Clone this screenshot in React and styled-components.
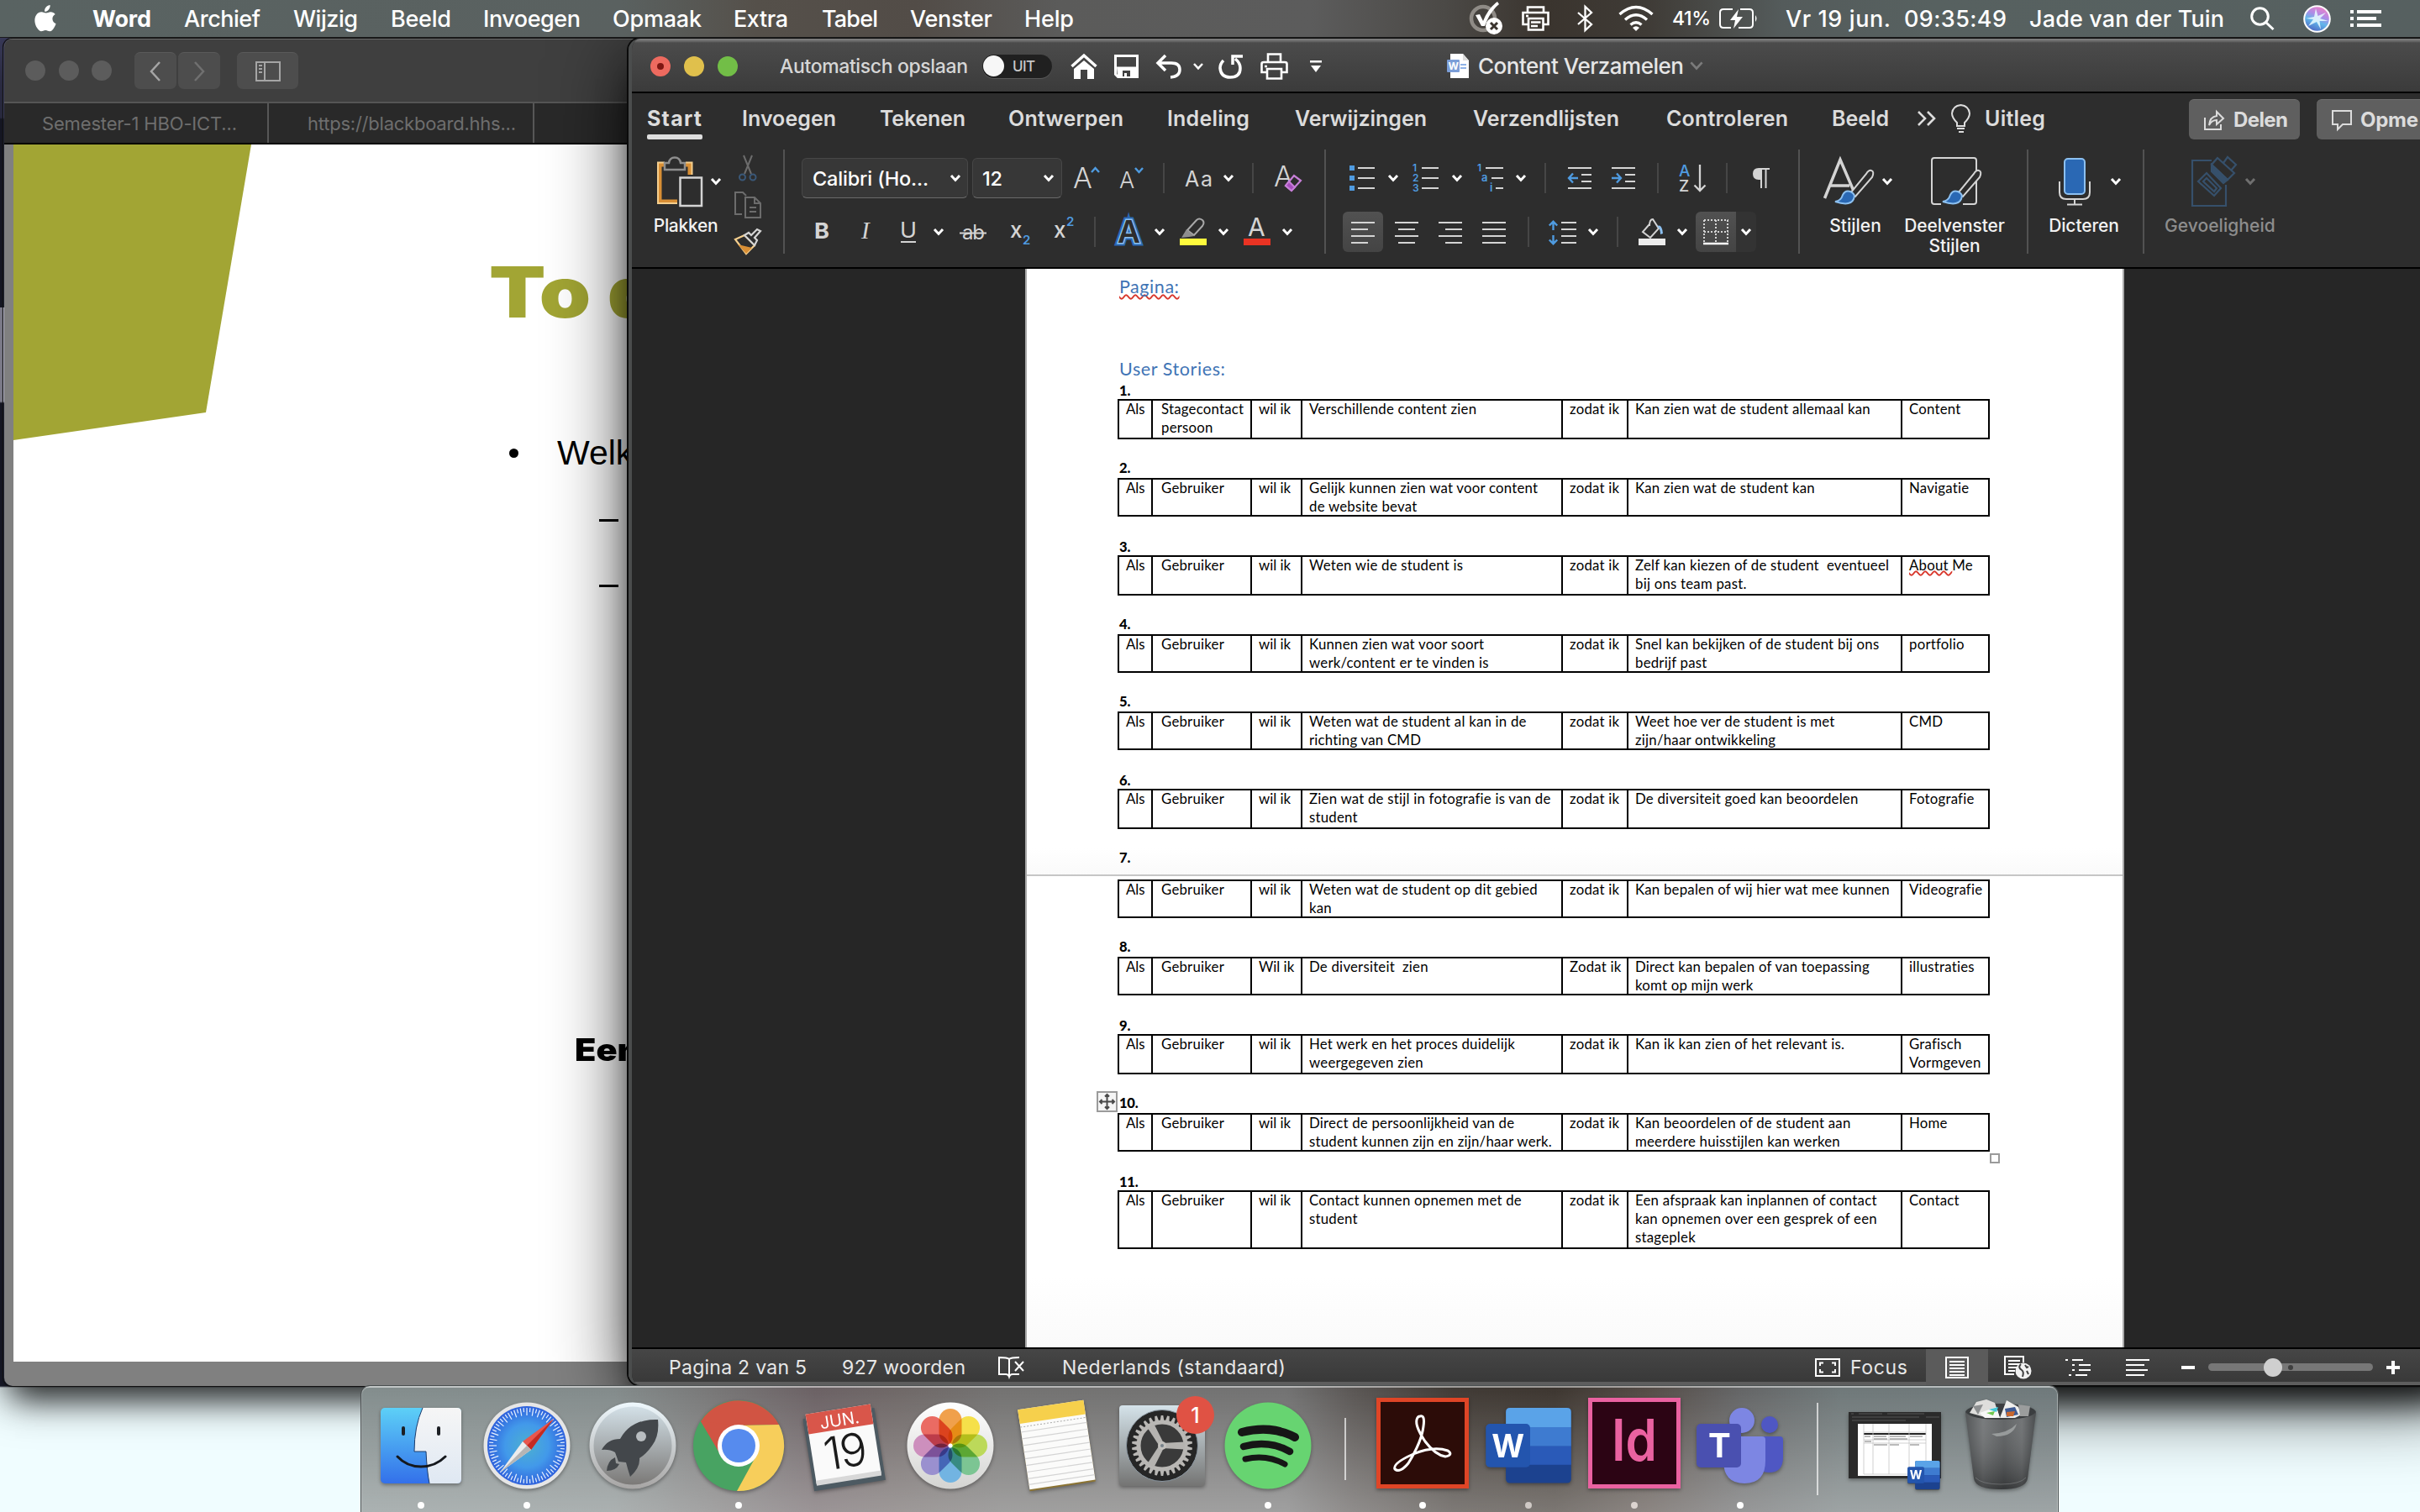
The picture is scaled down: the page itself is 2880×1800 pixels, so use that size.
import React, { useLayoutEffect, useRef, useState } from "react";
import styled, { createGlobalStyle, css } from "styled-components";

const UI = `Inter, "Liberation Sans", sans-serif`;
const DOC = `Lato, "Open Sans", sans-serif`;

const GlobalStyle = createGlobalStyle`
  * { box-sizing: border-box; }
  html, body { margin: 0; padding: 0; }
  body { width: 2880px; height: 1800px; overflow: hidden; font-family: ${UI}; background: #f0fdff; }
  svg { display: block; overflow: visible; flex: none; }
`;

/* ---------- shared parts ---------- */

const Text = styled.span`
  display: block;
  flex: none;
  white-space: pre;
  width: ${(p) => p.$w}px;
  margin-left: ${(p) => p.$ml || 0}px;
  font-family: ${(p) => p.$font || UI};
  font-size: ${(p) => p.$size || 27}px;
  font-weight: ${(p) => p.$weight || 400};
  color: ${(p) => p.$color || "#fff"};
`;

/* A one-line label whose tracking is adjusted so that it fills its column. */
function Label({ children, w, ...rest }) {
  const ref = useRef(null);
  const [tracking, setTracking] = useState(0);
  useLayoutEffect(() => {
    const natural = ref.current.getBoundingClientRect().width;
    setTracking((w - natural) / Math.max(1, String(children).length - 1));
  }, [children, w]);
  return (
    <Text $w={w} {...rest}>
      <span ref={ref} style={{ letterSpacing: tracking }}>{children}</span>
    </Text>
  );
}

const Slot = styled.div`
  flex: none;
  display: flex;
  align-items: center;
  width: ${(p) => p.$w}px;
  margin-left: ${(p) => p.$ml || 0}px;
`;

function Icon({ w, h, ml, vb, children, fill = "none", stroke, sw = 2 }) {
  return (
    <Slot $w={w} $ml={ml}>
      <svg width={w} height={h} viewBox={vb || `0 0 ${w} ${h}`} fill={fill} stroke={stroke} strokeWidth={sw}>
        {children}
      </svg>
    </Slot>
  );
}

const Chevron = ({ ml = 14, w = 12, h = 8, color = "#fff", sw = 3 }) => (
  <Icon w={w} h={h} ml={ml} vb="0 0 12 8" stroke={color} sw={sw}>
    <path d="M1 1 L6 6.4 L11 1" />
  </Icon>
);

const Desktop = styled.div`
  position: relative;
  width: 2880px;
  height: 1800px;
  overflow: hidden;
  background: linear-gradient(#3b3c5c 0 140px, #1e2133 142px 366px, #b5b4c8 366px 478px, #1e2133 480px 1650px, #f0fdff 1652px);
`;

/* ---------- menu bar ---------- */

const MenuBar = styled.header`
  position: absolute;
  inset: 0 0 auto 0;
  z-index: 5;
  height: 45px;
  display: flex;
  align-items: center;
  border-bottom: 1px solid #1c1c1c;
  background: linear-gradient(90deg, #596362 0, #5a6160 740px, #55504a 900px, #524c47 1090px, #5b5b5a 1260px, #5c5c5c 1560px, #4b4946 1720px, #3a342e 1840px, #3f3b36 1960px, #545b5b 2120px, #576160 2300px, #566060);
`;

function TopMenu() {
  return (
    <MenuBar>
      <Icon w={26} h={32} ml={42} vb="0 0 26 32" fill="#fff">
        <path d="M17.6 0c.3 2-.6 4-1.7 5.4-1.200 1.400-3 2.400-4.800 2.300-.3-2 .6-3.900 1.700-5.200C14 1.100 16 .1 17.600 0zM23.700 10.900c-2 1.200-3.300 3-3.300 5.400 0 2.800 1.700 5 4.200 5.900-.5 1.700-1.400 3.400-2.400 5-1.300 2-2.700 4-4.900 4-2.100 0-2.700-1.300-5.100-1.300s-3.200 1.300-5.200 1.300c-2.100.1-3.700-2.100-5-4.100C-.7 23-2 15.800 1.400 11.500 2.900 9.500 5.200 8.300 7.400 8.300c2.300 0 3.700 1.300 5.500 1.300 1.800 0 2.900-1.300 5.500-1.300 2 0 4 1 5.300 2.600z" />
      </Icon>
      <Label w={70} $ml={42} $weight={700}>Word</Label>
      <Label w={91} $ml={39} $weight={500}>Archief</Label>
      <Label w={77} $ml={39} $weight={500}>Wijzig</Label>
      <Label w={72} $ml={39} $weight={500}>Beeld</Label>
      <Label w={116} $ml={38} $weight={500}>Invoegen</Label>
      <Label w={106} $ml={38} $weight={500}>Opmaak</Label>
      <Label w={65} $ml={38} $weight={500}>Extra</Label>
      <Label w={67} $ml={40} $weight={500}>Tabel</Label>
      <Label w={98} $ml={38} $weight={500}>Venster</Label>
      <Label w={59} $ml={38} $weight={500}>Help</Label>
      <Icon w={40} h={40} ml={470}>
        <circle cx="17" cy="20" r="14" stroke="#8f8b86" strokeWidth="4.500" />
        <path d="M8 16 L13 15 L17 23 Q23 8 34 0 L36 3 Q25 12 19 29 L15 29 Z" fill="#fff" />
        <circle cx="30" cy="29" r="10" fill="#fff" />
        <path d="M26 25 L34 33 M34 25 L26 33" stroke="#3a342e" strokeWidth="3" />
      </Icon>
      <Icon w={33} h={30} ml={23} stroke="#fff" sw={2.600}>
        <path d="M7 7 V1.500 H26 V7 M7 22 H1.500 V8 H31.500 V22 H26 M8 15 H25.500 V28.500 H8 Z M11 19.500 H22.500 M11 24 H19" />
        <path d="M5 12 H8" />
      </Icon>
      <Icon w={19} h={32} ml={33} stroke="#fff" sw={2.300}>
        <path d="M1 9 L17 23 L9.500 30 V2 L17 9 L1 23" />
      </Icon>
      <Icon w={42} h={30} ml={30} stroke="#fff" sw={3.400}>
        <path d="M1.500 10 Q21 -7 40.500 10 M8 16.500 Q21 5 34 16.500 M14.500 22.500 Q21 17 27.500 22.500" />
        <path d="M17 26 Q21 22.500 25 26 L21 30 Z" fill="#fff" stroke="none" />
      </Icon>
      <Label w={46} $ml={22} $size={23} $weight={500}>41%</Label>
      <Icon w={46} h={24} ml={10} stroke="#fff" sw={2}>
        <path d="M16 1 H5 Q1 1 1 5 V19 Q1 23 5 23 H14 M25 1 H36 Q40 1 40 5 V19 Q40 23 36 23 H23" />
        <path d="M23 1 L13 14 H19 L17 24 L28 10 H21 Z" fill="#fff" stroke="none" />
        <path d="M43 8 Q46 12 43 16 Z" fill="#fff" stroke="none" />
      </Icon>
      <Label w={125} $ml={33} $weight={500}>Vr 19 jun.</Label>
      <Label w={122} $ml={16} $weight={500}>09:35:49</Label>
      <Label w={232} $ml={27} $weight={500}>Jade van der Tuin</Label>
      <Icon w={29} h={28} ml={31} stroke="#fff" sw={3}>
        <circle cx="11.500" cy="11.500" r="9.800" />
        <path d="M18.500 18.500 L27.500 27" />
      </Icon>
      <Icon w={33} h={33} ml={34}>
        <defs>
          <linearGradient id="siri" x1="0.700" y1="0" x2="0.300" y2="1">
            <stop offset="0" stopColor="#f47fc6" />
            <stop offset=".35" stopColor="#b08be6" />
            <stop offset=".6" stopColor="#62b6ea" />
            <stop offset="1" stopColor="#4a5fc0" />
          </linearGradient>
        </defs>
        <circle cx="16.500" cy="16.500" r="15.300" fill="url(#siri)" stroke="#fff" strokeWidth="2" />
        <path d="M15 4 L17.500 13 L27 9 L20 16 L30 19 L19.500 19 L21 29 L16 20 L6 25 L12 17 L3 16 L13 14 Z" fill="#e9fbff" opacity=".85" />
      </Icon>
      <Icon w={37} h={20} ml={23} stroke="#fff" sw={4}>
        <path d="M0 2 H4 M0 10 H4 M0 18 H4 M8 2 H37 M8 10 H31 M8 18 H37" />
      </Icon>
    </MenuBar>
  );
}

/* ---------- browser window ---------- */

const BrowserWindow = styled.section`
  position: absolute;
  left: 5px;
  top: 46px;
  width: 760px;
  height: 1604px;
  border-radius: 10px;
  overflow: hidden;
  display: flex;
  flex-direction: column;
  background: #808080;
`;
const BrowserShadow = styled.div`
  position: absolute;
  left: 4px;
  top: 46px;
  width: 1200px;
  height: 1604px;
  border-radius: 10px;
  box-shadow: 0 0 0 1px #111, 0 16px 50px rgba(0, 0, 0, 0.5), 0 26px 34px -14px rgba(0, 0, 0, 0.7);
`;
const BrowserBar = styled.div`
  height: 75px;
  flex: none;
  display: flex;
  align-items: center;
  background: #3f3f3f;
  border-top: 1px solid #6c6c6c;
`;
const GreyDot = styled.i`
  width: 24px;
  height: 24px;
  flex: none;
  border-radius: 50%;
  background: #5c5c5c;
  margin-left: ${(p) => p.$ml}px;
`;
const BarButton = styled.div`
  width: ${(p) => p.$w}px;
  height: 44px;
  flex: none;
  margin-left: ${(p) => p.$ml}px;
  border-radius: 7px;
  background: #4d4d4d;
  border-top: 1px solid #5a5a5a;
  display: flex;
  align-items: center;
  justify-content: center;
`;
const BrowserTabs = styled.div`
  height: 51px;
  flex: none;
  display: flex;
  background: #292929;
  border-top: 2px solid #555;
  border-bottom: 2px solid #000;
`;
const BrowserTab = styled.div`
  width: ${(p) => p.$w}px;
  flex: none;
  display: flex;
  align-items: center;
  border-right: 2px solid #575757;
`;
const Slide = styled.div`
  height: 1449px;
  margin-left: 11px;
  background: #fff;
  display: grid;
  grid-template-columns: 570px 1fr;
`;
const SlideText = styled.div`
  padding-top: 121px;
  display: flex;
  flex-direction: column;
  align-items: flex-start;
`;
const SlideTitle = styled.h1`
  margin: 0 0 0 -4px;
  font: 900 84px/110px ${UI};
  color: #a2a534;
  white-space: pre;
  transform: scaleX(1.17);
  transform-origin: left;
`;
const Bullet = styled.div`
  display: flex;
  align-items: center;
  height: 50px;
  margin-top: ${(p) => p.$mt}px;
  padding-left: 20px;
  font: 41px/50px "Liberation Sans", sans-serif;
  color: #000;
`;
const BulletDot = styled.i`
  width: 11px;
  height: 11px;
  flex: none;
  border-radius: 50%;
  background: #000;
  margin-right: 46px;
`;
const SubDash = styled.div`
  width: 23px;
  height: 3px;
  margin: ${(p) => p.$mt}px 0 0 127px;
  background: #000;
`;
const SlideFoot = styled.div`
  margin: 526px 0 0 98px;
  font: 900 37px/50px ${UI};
  color: #000;
  transform: scaleX(1.12);
  transform-origin: left;
`;

function Browser() {
  return (
    <BrowserWindow>
      <BrowserBar>
        <GreyDot $ml={25} /><GreyDot $ml={16} /><GreyDot $ml={15} />
        <BarButton $w={50} $ml={27}>
          <svg width="14" height="24" fill="none" stroke="#a5a5a5" strokeWidth="2.500"><path d="M12 1 L2 12 L12 23" /></svg>
        </BarButton>
        <BarButton $w={50} $ml={2}>
          <svg width="14" height="24" fill="none" stroke="#707070" strokeWidth="2.500"><path d="M2 1 L12 12 L2 23" /></svg>
        </BarButton>
        <BarButton $w={73} $ml={20}>
          <svg width="30" height="24" fill="none" stroke="#a5a5a5" strokeWidth="2"><path d="M1 1 H29 V23 H1 Z M11 1 V23 M4 5 H8 M4 9 H8 M4 13 H8" /></svg>
        </BarButton>
      </BrowserBar>
      <BrowserTabs>
        <BrowserTab $w={315}><Label w={232} $ml={45} $size={22} $color="#6e6e6e">Semester-1 HBO-ICT...</Label></BrowserTab>
        <BrowserTab $w={316}><Label w={248} $ml={46} $size={22} $color="#6e6e6e">https://blackboard.hhs...</Label></BrowserTab>
      </BrowserTabs>
      <Slide>
        <svg width="570" height="400"><path d="M0 0 H283 L229 319 L0 352 Z" fill="#a2a534" /></svg>
        <SlideText>
          <SlideTitle>To d</SlideTitle>
          <Bullet $mt={111}><BulletDot />Welk</Bullet>
          <SubDash $mt={54} />
          <SubDash $mt={75} />
          <SlideFoot>Een</SlideFoot>
        </SlideText>
      </Slide>
    </BrowserWindow>
  );
}

/* ---------- word window ---------- */

const WordWindow = styled.section`
  position: absolute;
  left: 748px;
  top: 46px;
  width: 2180px;
  height: 1603px;
  border-left: 4px solid #4b4d4d;
  border-radius: 14px;
  overflow: hidden;
  display: flex;
  flex-direction: column;
  background: #262626;
`;
const WordShadow = styled.div`
  position: absolute;
  left: 748px;
  top: 46px;
  width: 2180px;
  height: 1603px;
  border-radius: 14px;
  box-shadow: 0 0 0 2px #0b0b0b, 0 20px 90px rgba(0, 0, 0, 0.75), 0 34px 36px -14px rgba(0, 0, 0, 0.85);
`;
const TitleBar = styled.div`
  height: 65px;
  flex: none;
  display: flex;
  align-items: center;
  padding-top: 2px;
  border-bottom: 2px solid #000;
  background: linear-gradient(#818181 0, #6a6a6a 3px, #4b4b4b 5px, #3b3b3b);
`;
const Light = styled.i`
  width: 24px;
  height: 24px;
  flex: none;
  display: grid;
  place-items: center;
  border-radius: 50%;
  margin-left: ${(p) => p.$ml}px;
  background: ${(p) => p.$color};
  &::after {
    content: "";
    width: 8px;
    height: 8px;
    border-radius: 50%;
    background: ${(p) => (p.$dot ? "#7d1712" : "transparent")};
  }
`;
const Toggle = styled.div`
  width: 83px;
  height: 28px;
  flex: none;
  margin-left: 17px;
  border-radius: 14px;
  display: flex;
  align-items: center;
  background: #202020;
  box-shadow: 0 1px 0 #5a5a5a;
`;
const Knob = styled.i`
  width: 25px;
  height: 25px;
  margin-left: 1px;
  border-radius: 50%;
  background: #f7f7f7;
`;

const TabRow = styled.nav`
  height: 59px;
  flex: none;
  display: flex;
  align-items: center;
  background: #2d2d2d;
`;
const Tab = styled.div`
  position: relative;
  margin-left: ${(p) => p.$ml}px;
  ${(p) => p.$active && css`
    &::after {
      content: "";
      position: absolute;
      left: 0;
      right: -1px;
      bottom: -10px;
      height: 6px;
      border-radius: 2px;
      background: #dedede;
    }
  `}
`;
const ActionButton = styled.div`
  width: ${(p) => p.$w}px;
  height: 48px;
  flex: none;
  margin: 3px 0 0 ${(p) => p.$ml}px;
  border-radius: 6px;
  background: #5f5f5f;
  border-top: 1px solid #6f6f6f;
  display: flex;
  align-items: center;
`;
const Tools = styled.div`
  height: 150px;
  flex: none;
  display: flex;
  align-items: flex-start;
  padding-top: 8px;
  background: #2d2d2d;
  border-bottom: 2px solid #000;
`;
const Divider = styled.i`
  width: 2px;
  height: ${(p) => p.$h || 124}px;
  flex: none;
  margin-left: ${(p) => p.$ml || 0}px;
  background: ${(p) => (p.$h ? "#464646" : "#525252")};
`;
const Group = styled.div`
  width: ${(p) => p.$w}px;
  flex: none;
  margin-left: ${(p) => p.$ml || 0}px;
  padding-top: 10px;
  display: flex;
  flex-direction: column;
  gap: 16px;
`;
const Row = styled.div`
  height: 48px;
  display: flex;
  align-items: center;
`;
const SmallColumn = styled.div`
  margin-left: 16px;
  padding-top: 6px;
  display: flex;
  flex-direction: column;
  gap: 12px;
`;
const BigButton = styled.div`
  width: ${(p) => p.$w}px;
  flex: none;
  margin-left: ${(p) => p.$ml}px;
  padding-top: 6px;
`;
const BigIcon = styled.div`
  height: 64px;
  display: flex;
  align-items: center;
  padding-left: ${(p) => p.$pad}px;
`;
const BigLabel = styled.div`
  margin-top: 9px;
  text-align: center;
  white-space: nowrap;
  font-size: 21px;
  font-weight: 500;
  letter-spacing: ${(p) => p.$ls || 0}px;
  line-height: 24px;
  color: ${(p) => p.$color || "#f2f2f2"};
`;
const Select = styled.div`
  width: ${(p) => p.$w}px;
  height: 48px;
  flex: none;
  margin-left: ${(p) => p.$ml || 0}px;
  border: 1px solid #474747;
  border-bottom-color: #6a6a6a;
  border-radius: 6px;
  background: #373737;
  display: flex;
  align-items: center;
`;
const IconButton = styled.div`
  width: ${(p) => p.$w}px;
  height: 48px;
  flex: none;
  margin-left: ${(p) => p.$ml || 0}px;
  border-radius: ${(p) => p.$r || "6px"};
  background: ${(p) => p.$bg || "linear-gradient(#515151, #444)"};
  display: flex;
  align-items: center;
  justify-content: center;
`;

const G = "#d4d4d4";
const B = "#4f9be0";
const A = (p) => <text fontFamily={UI} fill={G} stroke="none" {...p} />;

const Brush = () => (
  <>
    <path d="M57 17 Q61 18 58 25 L38 48 L32 44 L51 21 Q54 16 57 17 Z" stroke={G} fill="#2d2d2d" />
    <path d="M14 54 Q21 53 23 46 Q26 40 32 42 Q39 45 36 51 Q32 60 14 54 Z" fill="#2a68b4" stroke="#8cc0f0" />
  </>
);

function HomeRibbon() {
  return (
    <Tools>
      <BigButton $w={84} $ml={22}>
        <BigIcon $pad={8}>
          <Icon w={54} h={60}>
            <path d="M9 10 H3 V54 H24 M34 10 H39 V22" stroke="#d98f35" strokeWidth="5" />
            <path d="M9 7.500 H1 V56 H24 M34 7.500 H41.500 V22" stroke="#f5cf8e" strokeWidth="2" />
            <path d="M9 16 V8 H14 Q15 1.500 21 1.500 Q27 1.500 28 8 H33 V16 Z" stroke="#8e8e8e" strokeWidth="2.500" fill="#2d2d2d" />
            <path d="M27.500 25.500 H53 V59 H27.500 Z" stroke={G} strokeWidth="2.500" fill="#2d2d2d" />
          </Icon>
          <Chevron ml={10} />
        </BigIcon>
        <BigLabel $ls={-0.3}>Plakken</BigLabel>
      </BigButton>
      <SmallColumn>
        <Icon w={32} h={32} sw={2}>
          <path d="M11 1 L20 23 M21 1 L12 23" stroke="#6c6c6c" />
          <circle cx="9.500" cy="27" r="3.500" stroke="#3a5878" /><circle cx="22" cy="27" r="3.500" stroke="#3a5878" />
        </Icon>
        <Icon w={32} h={32} stroke="#6c6c6c" sw={2}>
          <path d="M9 27 H1 V1 H10 L14 5 M13 7 H24 L31 14 V31 H13 Z M24 7 V14 H31 M18 19 H26 M18 24 H26" />
        </Icon>
        <Icon w={32} h={32} sw={2.200}>
          <path d="M1 13 L12 8 L24 20 L14 30 Z" fill="#2d2d2d" stroke="#f5cf8e" />
          <path d="M4 19 L21 23 L14 30 Z" fill="#d98f35" />
          <path d="M12 8 L17 5 L20 8 L27 1 L31 3 L24 11 L27 14 L24 20 Z" fill="#2d2d2d" stroke={G} />
        </Icon>
      </SmallColumn>
      <Divider $ml={26} />

      <Group $w={622} $ml={20}>
        <Row>
          <Select $w={198}>
            <Label w={138} $ml={12} $size={23.500} $weight={500}>Calibri (Ho...</Label>
            <Chevron ml={26} />
          </Select>
          <Select $w={107} $ml={5}>
            <Label w={24} $ml={11} $size={23.500} $weight={500}>12</Label>
            <Chevron ml={49} />
          </Select>
          <Icon w={30} h={30} ml={14}><A x="-1" y="27" fontSize="34" fontWeight="300">A</A><path d="M21 8 L25.500 3 L30 8" stroke={B} strokeWidth="2.500" /></Icon>
          <Icon w={27} h={30} ml={25}><A x="-1" y="27" fontSize="27" fontWeight="300">A</A><path d="M18 3 L22.500 8 L27 3" stroke={B} strokeWidth="2.500" /></Icon>
          <Divider $h={36} $ml={24} />
          <Icon w={31} h={30} ml={25}><A x="-1" y="25" fontSize="25" fontWeight="400" textLength="33">Aa</A></Icon>
          <Chevron />
          <Divider $h={36} $ml={22} />
          <Icon w={32} h={34} ml={25}>
            <A x="-1" y="27" fontSize="34" fontWeight="300">A</A>
            <path d="M13 26 L23 14 L31 20 L20 32 Z" fill="#2d2d2d" stroke="#c77fd8" strokeWidth="2.200" />
            <path d="M13 26 L17 21 L24 28 L20 32 Z" fill="#a64dbd" stroke="#c77fd8" strokeWidth="2" />
          </Icon>
        </Row>
        <Row>
          <Icon w={14} h={30} ml={17}><A x="-2" y="23" fontSize="26" fontWeight="700" textLength="18" lengthAdjust="spacingAndGlyphs">B</A></Icon>
          <Icon w={13} h={30} ml={39}><A x="1" y="23" fontSize="29" fontFamily='"Liberation Serif", serif' fontStyle="italic">I</A></Icon>
          <Icon w={18} h={30} ml={35}><A x="-1" y="22" fontSize="25" fontWeight="400" textLength="20" lengthAdjust="spacingAndGlyphs">U</A><path d="M0 27 H18" stroke={G} /></Icon>
          <Chevron ml={21} />
          <Icon w={32} h={30} ml={19}><A x="3" y="24" fontSize="24" textLength="27">ab</A><path d="M0 16.500 H32" stroke={G} /></Icon>
          <Icon w={23} h={30} ml={29}><A x="-1" y="22" fontSize="26" fontWeight="500">x</A><A x="14" y="30" fontSize="15" fontWeight="600" fill={B}>2</A></Icon>
          <Icon w={23} h={30} ml={29}><A x="-1" y="22" fontSize="26" fontWeight="500">x</A><A x="14" y="8" fontSize="15" fontWeight="600" fill={B}>2</A></Icon>
          <Divider $h={36} $ml={24} />
          <Icon w={32} h={32} ml={24}>
            <text x="2" y="29" fontFamily={UI} fontSize="37" fontWeight="600" fill="#2d2d2d" stroke="#2a68b4" strokeWidth="7" paintOrder="stroke">A</text>
            <text x="2" y="29" fontFamily={UI} fontSize="37" fontWeight="600" fill="#2d2d2d" stroke="#8cc0f0" strokeWidth="3" paintOrder="stroke">A</text>
          </Icon>
          <Chevron />
          <Icon w={32} h={32} ml={18}>
            <path d="M9 14 L20 2 Q23 -1 27 2 Q30 5 27 9 L17 20 Z" stroke="#a8a8a8" />
            <path d="M8 13 L17 21 L11 22 L2 23 Z" fill="#8e8e8e" />
            <path d="M0 24 H32 V32 H0 Z" fill="#fffb3d" />
          </Icon>
          <Chevron />
          <Icon w={32} h={32} ml={18}><A x="5" y="21" fontSize="30" fontWeight="400">A</A><path d="M0 24 H32 V32 H0 Z" fill="#e93323" /></Icon>
          <Chevron />
        </Row>
      </Group>
      <Divider />

      <Group $w={562}>
        <Row>
          <Icon w={30} h={30} ml={28}><path d="M0 3 H6 M0 15 H6 M0 27 H6" stroke={B} strokeWidth="6" /><path d="M10 3 H30 M10 15 H30 M10 27 H30" stroke={G} /></Icon>
          <Chevron ml={16} />
          <Icon w={31} h={32} ml={17}>
            <A x="0" y="8" fontSize="12" fontWeight="600" fill={B}>1</A><A x="0" y="20" fontSize="12" fontWeight="600" fill={B}>2</A><A x="0" y="32" fontSize="12" fontWeight="600" fill={B}>3</A>
            <path d="M11 4 H31 M11 16 H31 M11 28 H31" stroke={G} />
          </Icon>
          <Chevron ml={16} />
          <Icon w={31} h={32} ml={18}>
            <A x="0" y="8" fontSize="12" fontWeight="600" fill={B}>1</A><A x="5" y="20" fontSize="13" fontWeight="600" fill={B}>a</A><A x="15" y="32" fontSize="13" fontWeight="600" fill={B}>i</A>
            <path d="M10 4 H31 M17 16 H31 M22 28 H31" stroke={G} />
          </Icon>
          <Chevron ml={15} />
          <Divider $h={36} $ml={22} />
          <Icon w={28} h={28} ml={26}><path d="M0 2 H28 M16 10 H28 M16 18 H28 M0 26 H28" stroke={G} /><path d="M12 14 H1 M6 8.500 L1 14 L6 19.500" stroke={B} strokeWidth="2.400" /></Icon>
          <Icon w={28} h={28} ml={24}><path d="M0 2 H28 M16 10 H28 M16 18 H28 M0 26 H28" stroke={G} /><path d="M0 14 H11 M6 8.500 L11 14 L6 19.500" stroke={B} strokeWidth="2.400" /></Icon>
          <Divider $h={36} $ml={26} />
          <Icon w={32} h={34} ml={24}>
            <A x="0" y="15" fontSize="19" fontWeight="500" fill={B}>A</A><A x="0" y="33" fontSize="19" fontWeight="500">Z</A>
            <path d="M25 1 V32 M18.500 25.500 L25 32 L31.500 25.500" stroke={G} strokeWidth="2.300" />
          </Icon>
          <Divider $h={36} $ml={24} />
          <Icon w={20} h={24} ml={30}><path d="M11 0 H7 Q0 0 0 7 Q0 14 7 14 H9 V24" fill={G} /><path d="M10 1 V24 M15.500 1 V24 M7 1 H20" stroke={G} /></Icon>
        </Row>
        <Row>
          <IconButton $w={48} $ml={20}><svg width="28" height="28" stroke={G} strokeWidth="2"><path d="M0 3 H28 M0 11 H20 M0 19 H28 M0 27 H20" /></svg></IconButton>
          <Icon w={28} h={28} ml={14} stroke={G}><path d="M0 3 H28 M4 11 H24 M0 19 H28 M4 27 H24" /></Icon>
          <Icon w={28} h={28} ml={24} stroke={G}><path d="M0 3 H28 M8 11 H28 M0 19 H28 M8 27 H28" /></Icon>
          <Icon w={28} h={28} ml={24} stroke={G}><path d="M0 3 H28 M0 11 H28 M0 19 H28 M0 27 H28" /></Icon>
          <Divider $h={36} $ml={26} />
          <Icon w={33} h={28} ml={23}>
            <path d="M15 3 H33 M15 11 H33 M15 19 H33 M15 27 H33" stroke={G} />
            <path d="M5.500 2 V12 M.8 6.500 L5.500 1.800 L10.200 6.500 M5.500 18 V28 M.8 23.500 L5.500 28.200 L10.200 23.500" stroke={B} strokeWidth="2.400" />
          </Icon>
          <Chevron />
          <Divider $h={36} $ml={22} />
          <Icon w={32} h={32} ml={24}>
            <path d="M13 7 L5 16 L14 23 L24 12 L17 1 Q13 1 13 9" stroke={G} />
            <path d="M22 9 Q28 6 29 18 L26 19 Q26 12 22 9 Z" fill="#8cc0f0" />
            <path d="M0 24 H32 V32 H0 Z" fill="#ececec" />
          </Icon>
          <Chevron />
          <IconButton $w={48} $ml={10} $r="6px 0 0 6px">
            <svg width="30" height="30" fill="none" stroke={G} strokeWidth="2">
              <path d="M1 1 H30 M1 15 H30 M1 1 V27 M15 1 V27 M29 1 V27" strokeDasharray="2 2" />
              <path d="M0 29 H30" stroke="#fff" strokeWidth="2.500" />
            </svg>
          </IconButton>
          <IconButton $w={24} $r="0 6px 6px 0" $bg="#333">
            <svg width="12" height="8" fill="none" stroke="#fff" strokeWidth="3"><path d="M1 1 L6 6.400 L11 1" /></svg>
          </IconButton>
        </Row>
      </Group>
      <Divider />

      <BigButton $w={84} $ml={24}>
        <BigIcon $pad={4}>
          <Icon w={60} h={60} sw={2}>
            <path d="M1.500 50 L20 4 L38 46 M8 35 H31" stroke={G} strokeWidth="3.500" />
            <Brush />
          </Icon>
          <Chevron ml={10} />
        </BigIcon>
        <BigLabel>Stijlen</BigLabel>
      </BigButton>
      <BigButton $w={120} $ml={16}>
        <BigIcon $pad={32}>
          <Icon w={60} h={60} sw={2}>
            <path d="M12 57 H4 Q1 57 1 54 V5 Q1 2 4 2 H51 Q54 2 54 5 V54 Q54 57 51 57 H38" stroke={G} />
            <Brush />
          </Icon>
        </BigIcon>
        <BigLabel $ls={-0.1}>Deelvenster<br />Stijlen</BigLabel>
      </BigButton>
      <Divider $ml={26} />
      <BigButton $w={84} $ml={24}>
        <BigIcon $pad={12}>
          <Icon w={38} h={58} sw={2}>
            <rect x="7" y="2" width="24" height="42" rx="4" fill="#2a68b4" stroke="#8cc0f0" />
            <path d="M1 29 V42 Q1 50 9 50 H29 Q37 50 37 42 V29 M19 50 V56 M10 56.500 H28" stroke={G} />
          </Icon>
          <Chevron ml={24} />
        </BigIcon>
        <BigLabel $ls={-0.1}>Dicteren</BigLabel>
      </BigButton>
      <Divider $ml={28} />
      <BigButton $w={129} $ml={24}>
        <BigIcon $pad={32}>
          <Icon w={54} h={60} stroke="#36506b" sw={2.200}>
            <path d="M24 5 H1 V59 H41 V34" />
            <path d="M18 20 L8 30 L27 47 L35 38 Z M18 26 L14 30 L27 42 L30 38 Z M31 2 L24 10 L43 28 L51 20 Z M38 8 L43 1 L53 10 L47 17" />
            <path d="M24 10 L43 28 L38 32 L24 18 Z" fill="#36506b" />
          </Icon>
          <Chevron ml={10} color="#6f6f6f" />
        </BigIcon>
        <BigLabel $color="#8d8d8d" $ls={0.05}>Gevoeligheid</BigLabel>
      </BigButton>
    </Tools>
  );
}

/* ---------- document ---------- */

const Canvas = styled.div`
  height: 1284px;
  flex: none;
  padding-left: 468px;
  display: flex;
  background: #262626;
`;
const Page = styled.article`
  width: 1308px;
  height: 1284px;
  padding: 6px 0 0 110px;
  border: solid #a9a9a9;
  border-width: 0 2px 0 2px;
  background: linear-gradient(#fff 0 690px, #fafafa 721px, #fff 722px 1200px, #fafafa);
  font-family: ${DOC};
  color: #000;
`;
const Heading = styled.div`
  height: 30px;
  display: flex;
  align-items: center;
  margin-bottom: ${(p) => p.$mb || 0}px;
  ${(p) => p.$wavy && css`
    span > span { text-decoration: underline wavy #d8372c 1.500px; text-underline-offset: 1px; text-decoration-skip-ink: none; }
  `}
`;
const Story = styled.section`
  position: relative;
  margin-top: ${(p) => p.$mt}px;
`;
const Num = styled.div`
  height: 22px;
  line-height: 22px;
  font-size: 16.500px;
  font-weight: 900;
  letter-spacing: -0.2px;
`;
const StoryTable = styled.div`
  width: 1038px;
  height: ${(p) => p.$h}px;
  margin: ${(p) => p.$gap}px 0 0 -2px;
  border: solid #000;
  border-width: 2px 2px 2px 0;
  display: grid;
  grid-template-columns: 40px 118px 60px 310px 78px 326px 104px;
`;
const Cell = styled.div`
  border-left: 2px solid #000;
  padding-left: ${(p) => p.$pad || 8}px;
  white-space: pre;
  font-size: 16.800px;
  line-height: 22px;
  letter-spacing: ${(p) => (p.$tight ? 0 : 0.23)}px;
  & > div { margin-top: -1px; }
`;
const Misspelt = styled.span`
  text-decoration: underline wavy #d8372c 1.500px;
  text-underline-offset: 0;
  text-decoration-skip-ink: none;
`;
const PageBreak = styled.div`
  height: 2px;
  margin: 9px 0 4px -110px;
  background: #c6c6c6;
`;
const MoveHandle = styled.div`
  position: absolute;
  left: -27px;
  top: -3px;
  width: 25px;
  height: 25px;
  border: 2px solid #9b9b9b;
  background: #f5f5f5;
`;
const ResizeHandle = styled.div`
  position: absolute;
  left: 1036px;
  bottom: -14px;
  width: 12px;
  height: 12px;
  border: 2px solid #9b9b9b;
  background: #fff;
`;

const stories = [
  [0, -1, 48, "Als", "Stagecontact\npersoon", "wil ik", "Verschillende content zien", "zodat ik", "Kan zien wat de student allemaal kan", "Content"],
  [23, 1, 46, "Als", "Gebruiker", "wil ik", "Gelijk kunnen zien wat voor content\nde website bevat", "zodat ik", "Kan zien wat de student kan", "Navigatie"],
  [25, -1, 48, "Als", "Gebruiker", "wil ik", "Weten wie de student is", "zodat ik", "Zelf kan kiezen of de student  eventueel\nbij ons team past.", <><Misspelt>About </Misspelt>Me</>],
  [23, 1, 46, "Als", "Gebruiker", "wil ik", "Kunnen zien wat voor soort\nwerk/content er te vinden is", "zodat ik", "Snel kan bekijken of de student bij ons\nbedrijf past", "portfolio"],
  [23, 1, 46, "Als", "Gebruiker", "wil ik", "Weten wat de student al kan in de\nrichting van CMD", "zodat ik", "Weet hoe ver de student is met\nzijn/haar ontwikkeling", "CMD"],
  [25, -1, 48, "Als", "Gebruiker", "wil ik", "Zien wat de stijl in fotografie is van de\nstudent", "zodat ik", "De diversiteit goed kan beoordelen", "Fotografie"],
  [23, 0, 46, "Als", "Gebruiker", "wil ik", "Weten wat de student op dit gebied\nkan", "zodat ik", "Kan bepalen of wij hier wat mee kunnen", "Videografie"],
  [23, 1, 46, "Als", "Gebruiker", "Wil ik", "De diversiteit  zien", "Zodat ik", "Direct kan bepalen of van toepassing\nkomt op mijn werk", "illustraties"],
  [25, -1, 48, "Als", "Gebruiker", "wil ik", "Het werk en het proces duidelijk\nweergegeven zien", "zodat ik", "Kan ik kan zien of het relevant is.", "Grafisch\nVormgeven"],
  [23, 1, 46, "Als", "Gebruiker", "wil ik", "Direct de persoonlijkheid van de\nstudent kunnen zijn en zijn/haar werk.", "zodat ik", "Kan beoordelen of de student aan\nmeerdere huisstijlen kan werken", "Home"],
  [25, -1, 70, "Als", "Gebruiker", "wil ik", "Contact kunnen opnemen met de\nstudent", "zodat ik", "Een afspraak kan inplannen of contact\nkan opnemen over een gesprek of een\nstageplek", "Contact"],
];

function Document() {
  return (
    <Canvas>
      <Page>
        <Heading $mb={68} $wavy><Label w={71} $font={DOC} $size={21.500} $color="#3f74b5">Pagina:</Label></Heading>
        <Heading><Label w={126} $font={DOC} $size={21.500} $color="#3f74b5">User Stories:</Label></Heading>
        {stories.map(([mt, gap, h, ...cells], i) => (
          <Story key={i} $mt={mt}>
            {i === 9 && (
              <MoveHandle>
                <svg width="21" height="21" fill="none" stroke="#4a4a4a" strokeWidth="2">
                  <path d="M10.500 2 V19 M2 10.500 H19 M8 4.500 L10.500 2 L13 4.500 M8 16.500 L10.500 19 L13 16.500 M4.500 8 L2 10.500 L4.500 13 M16.500 8 L19 10.500 L16.500 13" />
                </svg>
              </MoveHandle>
            )}
            <Num>{i + 1}.</Num>
            {i === 6 && <PageBreak />}
            <StoryTable $gap={gap} $h={h}>
              {cells.map((c, k) => (
                <Cell key={k} $pad={k === 1 ? 10 : 8} $tight={k === 0 || k === 2}><div>{c}</div></Cell>
              ))}
            </StoryTable>
            {i === 9 && <ResizeHandle />}
          </Story>
        ))}
      </Page>
    </Canvas>
  );
}

/* ---------- status bar ---------- */

const StatusBar = styled.footer`
  height: 45px;
  flex: none;
  display: flex;
  align-items: center;
  border-top: 2px solid #000;
  background: linear-gradient(#464646, #393939 39px, #5e5e5e 39px);
`;
const ViewButton = styled.div`
  width: 74px;
  align-self: stretch;
  flex: none;
  margin-left: 22px;
  display: flex;
  align-items: center;
  justify-content: center;
  background: #5b5b5b;
`;
const ZoomTrack = styled.div`
  width: 196px;
  height: 9px;
  flex: none;
  margin-left: 16px;
  padding-left: 66px;
  border-radius: 5px;
  background: #777;
  display: flex;
  align-items: center;
`;
const ZoomKnob = styled.i`
  width: 22px;
  height: 22px;
  flex: none;
  border-radius: 50%;
  background: #cfcfcf;
`;
const ZoomTick = styled.i`
  width: 6px;
  height: 6px;
  margin-left: 7px;
  border-radius: 50%;
  background: #3f3f3f;
`;

function Status() {
  const t = "#e8e8e8";
  return (
    <StatusBar>
      <Label w={164} $ml={44} $size={23} $color={t}>Pagina 2 van 5</Label>
      <Label w={147} $ml={42} $size={23} $color={t}>927 woorden</Label>
      <Icon w={31} h={26} ml={39} stroke="#fff" sw={2}>
        <path d="M13 3 Q11 1 1 1 V21 H9 Q12 21 13 24 Q14 21 17 21 H25 M13 3 V23 M13 3 Q15 1 25 1 M20 6 L30 17 M30 6 L20 17" />
      </Icon>
      <Label w={266} $ml={45} $size={23} $color={t}>Nederlands (standaard)</Label>
      <Icon w={30} h={22} ml={630} stroke="#fff" sw={2}>
        <path d="M1 1 H29 V21 H1 Z" /><path d="M6 9 V5.500 H10 M20 5.500 H24 V9 M6 13 V16.500 H10 M20 16.500 H24 V13" />
      </Icon>
      <Label w={68} $ml={12} $size={23} $color={t}>Focus</Label>
      <ViewButton>
        <svg width="28" height="26" fill="none" stroke="#fff" strokeWidth="2"><path d="M1 1 H27 V25 H1 Z M5 6 H23 M5 10 H23 M5 14 H23 M5 18 H23 M5 22 H23" /></svg>
      </ViewButton>
      <Icon w={33} h={28} ml={19} stroke="#fff" sw={2}>
        <path d="M12 22 H1 V1 H23 V8 M5 6 H19 M5 10 H19 M5 14 H15 M5 18 H13" />
        <circle cx="23" cy="18" r="9.500" fill="#f2f2f2" stroke="none" />
        <path d="M20 10 Q16 14 21 17 Q24 19 22 25 M25 11 L27 14 L29 13 M27 18 L29 22" stroke="#3f3f3f" />
      </Icon>
      <Icon w={30} h={22} ml={40} stroke="#fff" sw={2.200}>
        <path d="M0 2 H3 M8 2 H21 M8 8 H11 M16 8 H30 M8 14 H11 M16 14 H30 M4 20 H7 M12 20 H26" />
      </Icon>
      <Icon w={28} h={22} ml={42} stroke="#fff" sw={2.200}><path d="M0 2 H28 M0 8 H22 M0 14 H26 M0 20 H22" /></Icon>
      <Icon w={16} h={4} ml={38} fill="#fff"><path d="M0 0 H16 V4 H0 Z" /></Icon>
      <ZoomTrack><ZoomKnob /><ZoomTick /></ZoomTrack>
      <Icon w={16} h={16} ml={16} stroke="#fff" sw={4}><path d="M0 8 H16 M8 0 V16" /></Icon>
    </StatusBar>
  );
}

function Word() {
  const t = "#dcdcdc";
  const tabs = [[48, 112, "Invoegen"], [52, 102, "Tekenen"], [51, 137, "Ontwerpen"], [52, 98, "Indeling"], [54, 157, "Verwijzingen"], [55, 174, "Verzendlijsten"], [56, 145, "Controleren"], [52, 68, "Beeld"]];
  return (
    <WordWindow>
      <TitleBar>
        <Light $ml={22} $color="#ed6a5f" $dot /><Light $ml={16} $color="#e0c04c" /><Light $ml={16} $color="#72be47" />
        <Label w={224} $ml={50} $size={23} $weight={500} $color="#d6d6d6">Automatisch opslaan</Label>
        <Toggle>
          <Knob />
          <Label w={27} $ml={10} $size={17} $weight={500} $color="#c8c8c8">UIT</Label>
        </Toggle>
        <Icon w={32} h={30} ml={22} fill="#fff">
          <path d="M1.500 15 L16 2 L30.500 15" fill="none" stroke="#fff" strokeWidth="3.500" />
          <path d="M4 18 L16 8 L28 18 V30 H20 V19 H12 V30 H4 Z" />
        </Icon>
        <Icon w={29} h={28} ml={20} stroke="#fff" sw={3}>
          <path d="M1.500 1.500 H27.500 V26.500 H4.500 L1.500 23.500 Z" /><path d="M3 14.500 H26 V26 H4 Z" fill="#fff" stroke="none" />
          <path d="M10 19 H19 V26 H10 Z" fill="#414141" stroke="none" /><path d="M12 22 H15 V27 H12 Z" fill="#fff" stroke="none" />
        </Icon>
        <Icon w={30} h={28} ml={21} stroke="#fff" sw={3.500}>
          <path d="M11 1 L2 10 L11 19 M3 10 H18 Q28 10 28 18 Q28 26 17 27" />
        </Icon>
        <Chevron ml={14} sw={2.500} />
        <Icon w={30} h={30} ml={18} stroke="#fff" sw={3.500}>
          <path d="M6 8 Q2 12 2 17 Q3 28 14 28 Q26 28 26 17 Q26 11 20 6 M17 13 V3 H29" />
        </Icon>
        <Icon w={33} h={32} ml={20} stroke="#fff" sw={2.600}>
          <path d="M9 10 V1.500 H24 V10 M7 23 H1.500 V13 Q1.500 11 4 11 H29 Q31.500 11 31.500 13 V23 H26 M8 19 H25 V30.500 H8 Z" />
          <path d="M5 16 H8" />
        </Icon>
        <Icon w={14} h={14} ml={26} fill="#fff"><path d="M0 0 H14 V2.500 H0 Z M1 6 H13 L7 14 Z" /></Icon>
        <Icon w={26} h={29} ml={149}>
          <path d="M4 0 H19 L26 8 V29 H4 Z" fill="#fff" /><path d="M19 0 V8 H26 Z" fill="#dcdcdc" />
          <path d="M16 13 H23 M16 17 H23" stroke="#6c9be0" strokeWidth="1.500" />
          <rect x="0" y="7" width="15" height="15" rx="1" fill="#7b9ed8" />
          <text x="1.500" y="19" fontFamily={UI} fontSize="12" fontWeight="700" fill="#fff" textLength="12">W</text>
        </Icon>
        <Label w={245} $ml={11} $size={26} $weight={500} $color="#e6e6e6">Content Verzamelen</Label>
        <Chevron ml={7} w={16} h={10.600} color="#7b7b7b" sw={2} />
      </TitleBar>
      <TabRow>
        <Tab $ml={18} $active><Label w={65} $size={25} $weight={700} $color={t}>Start</Label></Tab>
        {tabs.map(([ml, w, s]) => <Tab key={s} $ml={ml}><Label w={w} $size={25} $weight={600} $color={t}>{s}</Label></Tab>)}
        <Icon w={23} h={18} ml={33} stroke={t} sw={2.600}><path d="M2 1 L10 9 L2 17 M13 1 L21 9 L13 17" /></Icon>
        <Icon w={23} h={34} ml={18} stroke={t} sw={2}>
          <path d="M7 26 V22 Q1 16 1 11 Q2 2 11.500 1 Q21 2 22 11 Q22 16 16 22 V26 Z M7 29 H16 M9 33 H15" />
        </Icon>
        <Label w={72} $ml={17} $size={25} $weight={600} $color={t}>Uitleg</Label>
        <ActionButton $w={132} $ml={171}>
          <Icon w={24} h={24} ml={18} stroke={t} sw={2}><path d="M1 9 V23 H20 V17 M6 18 Q7 8 15 7 V2 L23 10 L15 17 V12 Q9 12 6 18 Z" /></Icon>
          <Label w={65} $ml={11} $size={24} $weight={700} $color={t}>Delen</Label>
        </ActionButton>
        <ActionButton $w={180} $ml={20}>
          <Icon w={24} h={24} ml={18} stroke={t} sw={2}><path d="M1 1 H23 V17 H13 L7 23 V17 H1 Z" /></Icon>
          <Label w={69} $ml={10} $size={24} $weight={700} $color={t}>Opme</Label>
        </ActionButton>
      </TabRow>
      <HomeRibbon />
      <Document />
      <Status />
    </WordWindow>
  );
}

/* ---------- dock ---------- */

const DockBar = styled.div`
  position: absolute;
  left: 430px;
  top: 1650px;
  width: 2019px;
  height: 160px;
  padding: 0 7px;
  display: flex;
  border: solid rgba(255, 255, 255, 0.25);
  border-width: 2px 1px 0;
  border-radius: 10px 10px 0 0;
  box-shadow: 0 0 0 1px #4a4f50;
  background:
    linear-gradient(rgba(255, 255, 255, 0), rgba(255, 255, 255, 0.33) 150px),
    linear-gradient(90deg, #838d8d 0, #838b8b 300px, #777676 420px, #6b6164 540px, #6f6867 640px, #737271 760px, #727272 1100px, #5a5654 1180px, #403a35 1300px, #3d3630 1420px, #554c47 1530px, #646566 1640px, #6f7879 1760px, #6f797b);
`;
const DockItem = styled.div`
  position: relative;
  width: 126px;
  height: 150px;
  flex: none;
  display: flex;
  justify-content: center;
  padding-top: ${(p) => p.$top}px;
  svg { filter: drop-shadow(0 2px 2px rgba(0, 0, 0, 0.35)); }
`;
const RunDot = styled.i`
  position: absolute;
  left: 59px;
  top: 136px;
  width: 8px;
  height: 8px;
  border-radius: 50%;
  background: ${(p) => p.$color || "#fff"};
`;
const DockRule = styled.i`
  width: 2px;
  height: ${(p) => p.$h}px;
  flex: none;
  margin: ${(p) => p.$top}px 28px 0;
  background: rgba(255, 255, 255, 0.65);
`;
const Badge = styled.div`
  position: absolute;
  left: 80px;
  top: 10px;
  width: 45px;
  height: 45px;
  border-radius: 50%;
  display: grid;
  place-items: center;
  background: #e05244;
  font-size: 25px;
  font-weight: 500;
  color: #fff;
`;

const WordLogo = ({ w }) => (
  <svg width={w} height={w * 0.87} viewBox="0 0 103 90">
    <rect x="24" y="0" width="78" height="90" rx="5" fill="#1c428f" />
    <path d="M24 5 Q24 0 29 0 H97 Q102 0 102 5 V23 H24 Z" fill="#5aa3e8" />
    <path d="M24 23 H102 V46 H24 Z" fill="#3e7bd0" /><path d="M24 46 H102 V68 H24 Z" fill="#2a5ab8" />
    <rect x="0" y="19" width="53" height="52" rx="5" fill="#2355ae" />
    <text x="7" y="59" fontFamily={UI} fontSize="39" fontWeight="700" fill="#fff" textLength="39" lengthAdjust="spacingAndGlyphs">W</text>
  </svg>
);

const ring = (n) => Array.from({ length: n }, (_, i) => (i * 360) / n);

function Dock() {
  return (
    <DockBar>
      <DockItem $top={24}>
        <svg width="96" height="90">
          <defs>
            <linearGradient id="fl" x1="0" y1="0" x2="0" y2="1"><stop offset="0" stopColor="#5dd0f7" /><stop offset="1" stopColor="#3370ea" /></linearGradient>
            <linearGradient id="fr" x1="0" y1="0" x2="0" y2="1"><stop offset="0" stopColor="#f6f6f6" /><stop offset="1" stopColor="#dfe8f3" /></linearGradient>
          </defs>
          <rect width="96" height="90" rx="5" fill="url(#fl)" />
          <path d="M50 0 H91 Q96 0 96 5 V85 Q96 90 91 90 H58 Q55 75 54 52 H40 Q40 22 50 0 Z" fill="url(#fr)" />
          <path d="M50 0 Q40 22 40 52 H54 Q55 75 58 90" fill="none" stroke="#1c3c6c" strokeWidth="1" />
          <path d="M27 24 V31 M69 24 V31" stroke="#1c1f24" strokeWidth="4" strokeLinecap="round" />
          <path d="M20 58 Q31 70 48 70 Q65 70 77 58" fill="none" stroke="#15181d" strokeWidth="3" strokeLinecap="round" />
        </svg>
        <RunDot />
      </DockItem>
      <DockItem $top={17}>
        <svg width="104" height="104" viewBox="-52 -52 104 104">
          <defs><radialGradient id="sf"><stop offset="0" stopColor="#4cb0cf" /><stop offset=".55" stopColor="#4299ea" /><stop offset="1" stopColor="#2f62dc" /></radialGradient></defs>
          <circle r="51.500" fill="#e6e6e6" /><circle r="47" fill="url(#sf)" />
          {ring(72).map((a, i) => <path key={a} d={`M0 -45 V${i % 2 ? -40 : -36}`} stroke="#e8f2ff" strokeWidth="1.200" transform={`rotate(${a})`} />)}
          <path d="M32 -32 L-5 -5 L5 5 Z" fill="#e8574d" /><path d="M32 -32 L5 5 L0 0 Z" fill="#c42b22" />
          <path d="M-32 32 L-5 -5 L5 5 Z" fill="#ececec" /><path d="M-32 32 L5 5 L0 0 Z" fill="#b5b5b5" />
        </svg>
        <RunDot />
      </DockItem>
      <DockItem $top={17}>
        <svg width="104" height="104">
          <defs><linearGradient id="lp" x1="0" y1="0" x2="0" y2="1"><stop offset="0" stopColor="#d3e0e7" /><stop offset="1" stopColor="#7b7977" /></linearGradient>
            <linearGradient id="lq" x1="0" y1="0" x2="0" y2="1"><stop offset="0" stopColor="#eef8fd" /><stop offset="1" stopColor="#a7a5a4" /></linearGradient></defs>
          <circle cx="52" cy="52" r="51.500" fill="url(#lq)" /><circle cx="52" cy="52" r="46.500" fill="url(#lp)" />
          <path d="M82 21 Q84 40 75 52 Q68 62 60 67 Q61 78 49 89 Q46 80 44 72 L35 71 L31 60 Q24 56 15 57 Q22 44 37 44 Q50 20 82 21 Z" fill="#43474b" />
          <path d="M31 66 Q22 70 21 82 Q32 82 36 74 L32 73 Z" fill="#43474b" />
          <circle cx="62" cy="41" r="6" fill="#b8bdc0" />
        </svg>
      </DockItem>
      <DockItem $top={15}>
        <svg width="108" height="108" viewBox="-54 -54 108 108">
          <circle r="54" fill="#48a362" />
          <path d="M-45 -29 A54 54 0 0 1 48 -25 L0 -24 L-24 5 Z" fill="#d15443" />
          <path d="M48 -25 A54 54 0 0 1 -2 54 L21 12 L20 -14 L0 -24 Z" fill="#f7ce5b" />
          <path d="M-45 -29 L-21 12 L0 -24 Z" fill="#d15443" />
          <circle r="25" fill="#fff" /><circle r="20" fill="#568bee" />
        </svg>
        <RunDot />
      </DockItem>
      <DockItem $top={17}>
        <svg width="104" height="104">
          <g transform="rotate(-9 52 52)">
            <path d="M8 13 H94 V100 H8 Z" fill="#4d5a62" />
            <path d="M12 8 H90 V92 H12 Z" fill="#fafafa" /><path d="M12 88 H90 V94 H12 Z" fill="#d8d8d8" />
            <path d="M12 8 H90 V32 H12 Z" fill="#d9564a" />
            <text x="51" y="28" textAnchor="middle" fontFamily={UI} fontSize="20" fill="#fff">JUN.</text>
            <text x="51" y="78" textAnchor="middle" fontFamily={UI} fontSize="54" fontWeight="300" letterSpacing="-2" fill="#1b1b1b">19</text>
          </g>
        </svg>
      </DockItem>
      <DockItem $top={17}>
        <svg width="104" height="104" viewBox="-52 -52 104 104">
          <defs><linearGradient id="ph" x1="0" y1="0" x2="0" y2="1"><stop offset="0" stopColor="#fff" /><stop offset="1" stopColor="#d4d4d2" /></linearGradient></defs>
          <circle r="51.500" fill="url(#ph)" />
          <g style={{ isolation: "isolate" }}>
            {["#f0a04b", "#f5e04a", "#bcd95a", "#7cc593", "#72b4e2", "#9a90cf", "#cd8fbd", "#ea6b63"].map((c, i) => (
              <rect key={c} x="-13.500" y="-44" width="27" height="42" rx="13.500" fill={c} transform={`rotate(${i * 45})`} style={{ mixBlendMode: "multiply" }} />
            ))}
          </g>
          <circle r="2.500" fill="#fff" />
        </svg>
      </DockItem>
      <DockItem $top={14}>
        <svg width="94" height="110">
          <g transform="rotate(-8.500 47 55)">
            <path d="M8 8 H87 V104 H8 Z" fill="#8c7433" /><path d="M8 6 H87 V102 H8 Z" fill="#fbfbfa" />
            <path d="M8 6 H87 V23 H8 Z" fill="#f6d04c" />
            <path d="M8 27 H87" stroke="#aaa" strokeWidth="1" strokeDasharray="2 2" />
            {[33, 41, 49, 57, 65, 73, 81, 89, 96].map((y) => <path key={y} d={`M8 ${y} H87`} stroke="#d4d4d4" strokeWidth="1.200" />)}
          </g>
        </svg>
      </DockItem>
      <DockItem $top={21}>
        <svg width="102" height="96" viewBox="-51 -48 102 96">
          <defs><linearGradient id="sp" x1="0" y1="0" x2="0" y2="1"><stop offset="0" stopColor="#d5e3ea" /><stop offset="1" stopColor="#747473" /></linearGradient></defs>
          <rect x="-51" y="-48" width="102" height="96" rx="4" fill="url(#sp)" />
          <circle r="42.500" fill="#262626" stroke="#8c98a2" strokeWidth="1" />
          {ring(30).map((a) => <path key={a} d="M-2.300 -30 L-1.300 -36 H1.300 L2.300 -30 Z" fill="#b9b7b4" transform={`rotate(${a})`} />)}
          <circle r="28" fill="#3a3a3a" stroke="#b9b7b4" strokeWidth="5" />
          {[90, 210, 330].map((a) => <path key={a} d="M-3 0 L-4.500 -27 H4.500 L3 0 Z" fill="#b5b3b0" transform={`rotate(${a})`} />)}
          <circle r="5" fill="#c2c0bd" /><circle r="2" fill="#77818a" />
        </svg>
        <Badge>1</Badge>
      </DockItem>
      <DockItem $top={17}>
        <svg width="104" height="104">
          <circle cx="52" cy="52" r="51.500" fill="#67d471" />
          <g fill="none" stroke="#161616" strokeLinecap="round">
            <path d="M21 36 Q56 27 84 42" strokeWidth="10" /><path d="M23 53 Q53 45 78 59" strokeWidth="8.500" /><path d="M25 68 Q50 62 72 74" strokeWidth="7" />
          </g>
        </svg>
        <RunDot />
      </DockItem>
      <DockRule $h={74} $top={36} />
      <DockItem $top={12}>
        <svg width="110" height="108">
          <path d="M2.500 2.500 H107.500 V105.500 H2.500 Z" fill="#2c0c08" stroke="#df4526" strokeWidth="5" />
          <path d="M52 22 Q58 20 56 34 Q54 52 38 78 Q28 90 22 85 Q19 78 44 67 Q68 57 85 63 Q92 68 82 70 Q70 68 58 52 Q46 34 48 26 Q49 22 52 22 Z" fill="none" stroke="#fff" strokeWidth="3" />
        </svg>
        <RunDot />
      </DockItem>
      <DockItem $top={24}><WordLogo w={103} /><RunDot $color="#cfc9c5" /></DockItem>
      <DockItem $top={12}>
        <svg width="110" height="108">
          <path d="M2.500 2.500 H107.500 V105.500 H2.500 Z" fill="#2c0414" stroke="#ea62a1" strokeWidth="5" />
          <text x="28" y="75" fontFamily={UI} fontSize="69" fontWeight="600" fill="#ea62a1" textLength="54" lengthAdjust="spacingAndGlyphs">Id</text>
        </svg>
        <RunDot $color="#dcd4d0" />
      </DockItem>
      <DockItem $top={24}>
        <svg width="104" height="90">
          <circle cx="87" cy="20" r="10" fill="#4f57c3" /><circle cx="54" cy="15" r="15" fill="#7d86e3" />
          <path d="M72 34 H99 Q103 34 103 38 V59 Q103 77 86 77 Q76 77 70 70 Z" fill="#4f57c3" />
          <path d="M32 34 H78 Q82 34 82 38 V63 Q82 90 57 90 Q32 90 32 63 Z" fill="#7d86e3" />
          <rect x="0" y="19" width="53" height="52" rx="5" fill="#4a50b0" />
          <text x="14" y="59" fontFamily={UI} fontSize="40" fontWeight="700" fill="#fff">T</text>
        </svg>
        <RunDot />
      </DockItem>
      <DockRule $h={110} $top={18} />
      <DockItem $top={29}>
        <svg width="110" height="95">
          <rect width="110" height="79" fill="#2a2a2a" />
          <path d="M11 14 H99 V76 H11 Z" fill="#fff" />
          <path d="M3 2 H6 M12 2 H40 M46 2 H90 M4 6 H84 M92 6 H108 M4 10 H68" stroke="#555" strokeWidth="1" />
          <path d="M18 26 H92" stroke="#222" strokeWidth="2" />
          <path d="M18 14 V74 M29 14 V74 M48 14 V74 M72 14 V74 M92 14 V74 M18 24 H92 M18 33 H92 M18 37 H92 M18 74 H92" stroke="#c5c5c5" strokeWidth=".8" />
          <path d="M19 29 H26 M30 29 H45 M30 32 H46 M49 29 H68 M49 32 H70 M73 29 H88 M19 35 H27 M30 39 H46 M49 39 H60 M73 39 H84" stroke="#777" strokeWidth="1" />
          <g transform="translate(70 58)"><WordLogo w={39} /></g>
        </svg>
      </DockItem>
      <DockItem $top={12}>
        <svg width="86" height="110">
          <defs>
            <linearGradient id="tr" x1="0" y1="0" x2="1" y2="0"><stop offset="0" stopColor="#404345" /><stop offset=".25" stopColor="#6a6d6f" /><stop offset=".55" stopColor="#515456" /><stop offset=".8" stopColor="#636668" /><stop offset="1" stopColor="#343739" /></linearGradient>
            <linearGradient id="ts" x1="0" y1="0" x2="0" y2="1"><stop offset="0" stopColor="#fff" stopOpacity=".1" /><stop offset="1" stopColor="#000" stopOpacity=".35" /></linearGradient>
          </defs>
          <ellipse cx="43" cy="17" rx="42" ry="10" fill="#3b3e40" />
          <path d="M6 18 L14 5 L26 2 L36 6 L42 24 L24 23 Z" fill="#dededc" /><path d="M42 24 L50 3 L64 11 L68 20 L60 24 Z" fill="#efefed" />
          <path d="M18 18 L38 11 L42 24 L24 24 Z" fill="#f7f7f7" /><path d="M29 14 L40 11 L38 17 Z" fill="#45c8d8" /><path d="M26 18 L36 16 L34 21 Z" fill="#6fc64f" />
          <path d="M48 13 L60 11 L64 20 L50 23 Z" fill="#3e5a92" /><path d="M50 17 L60 16 L58 22 L50 22 Z" fill="#c8682f" />
          <path d="M64 8 L78 10 L76 22 L66 22 Z" fill="#9b9d9d" /><path d="M10 10 L22 8 L16 20 Z" fill="#8c8f90" />
          <path d="M1 17 Q8 26 43 26 Q78 26 85 17 L75 96 Q73 109 43 109 Q13 109 11 96 Z" fill="url(#tr)" />
          <path d="M1 17 Q8 26 43 26 Q78 26 85 17 L75 96 Q73 109 43 109 Q13 109 11 96 Z" fill="url(#ts)" />
          <path d="M32 43 Q52 42 62 31 Q58 46 38 46 Z" fill="#a4a7a8" opacity=".8" />
          <path d="M13 95 Q20 103 43 103 Q66 103 73 95" fill="none" stroke="#8d9092" opacity=".5" />
        </svg>
      </DockItem>
    </DockBar>
  );
}

export default function App() {
  return (
    <>
      <GlobalStyle />
      <Desktop>
        <BrowserShadow />
        <Browser />
        <WordShadow />
        <Word />
        <Dock />
        <TopMenu />
      </Desktop>
    </>
  );
}
